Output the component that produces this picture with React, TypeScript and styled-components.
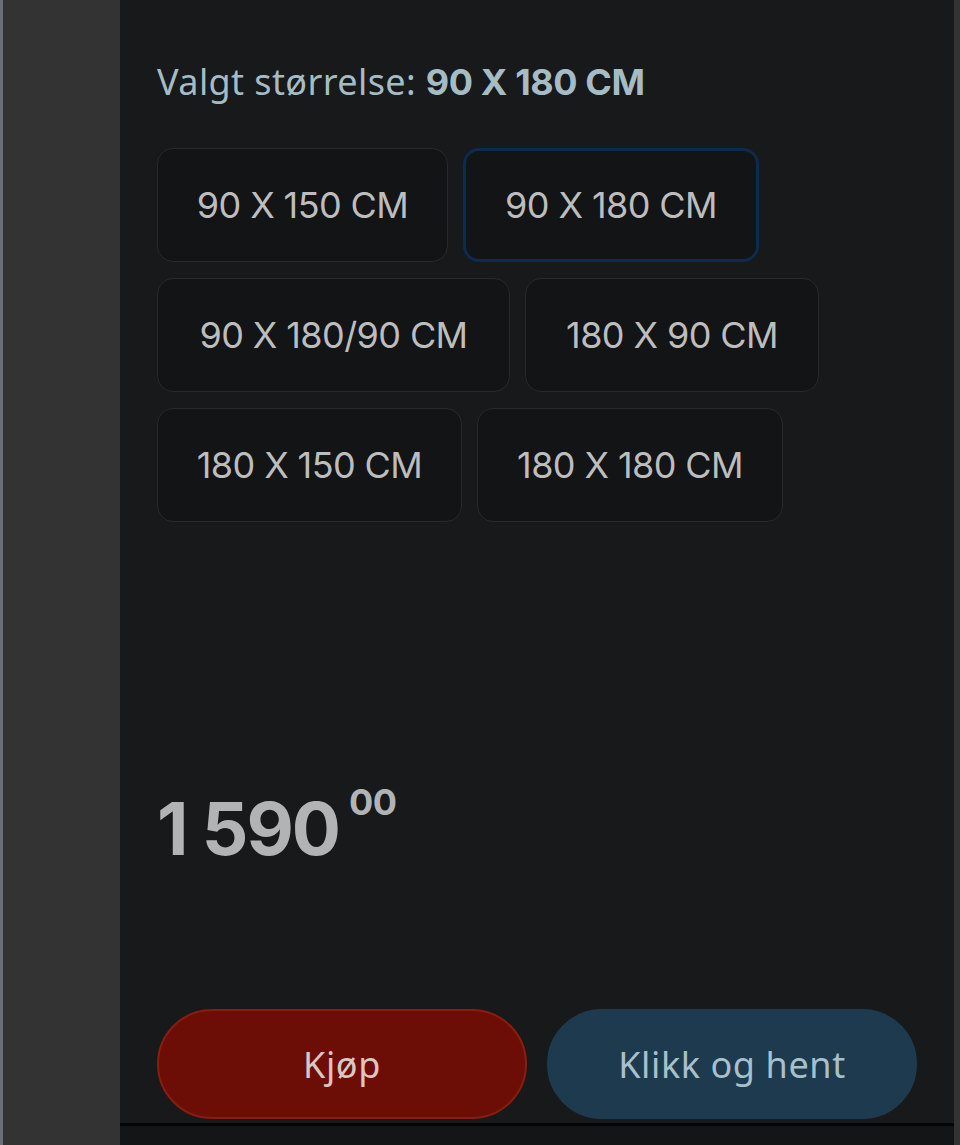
import React from "react";
import styled, { createGlobalStyle } from "styled-components";

const GlobalStyle = createGlobalStyle`
  html, body {
    margin: 0;
    padding: 0;
    background: #333333;
  }
  #root {
    height: 1145px;
  }
`;

const Screen = styled.div`
  height: 1145px;
  display: flex;
  background: #333333;
  border-left: 3px solid #6b6f76;
  box-sizing: border-box;
`;

const SideGap = styled.div`
  width: ${props => props.width}px;
  flex-shrink: 0;
  background: #333333;
`;

const Panel = styled.div`
  flex: 1;
  display: flex;
  flex-direction: column;
  background: #17191b;
`;

const Content = styled.div`
  flex: 1;
  display: flex;
  flex-direction: column;
  padding: 58px 37px 4px 37px;
`;

const Label = styled.div`
  font-family: "Noto Sans", "Open Sans", sans-serif;
  font-size: 36px;
  line-height: 48px;
  color: #a6bcc4;
  letter-spacing: 0.4px;
`;

const Strong = styled.span`
  font-family: Inter, "Noto Sans", sans-serif;
  font-size: 36px;
  font-weight: 700;
  letter-spacing: -0.4px;
`;

const Sizes = styled.div`
  display: flex;
  flex-direction: column;
  gap: 16px;
  margin-top: 42px;
`;

const SizeRow = styled.div`
  display: flex;
  gap: 15px;
`;

const SizeChip = styled.button`
  width: ${props => props.w}px;
  height: 114px;
  box-sizing: border-box;
  background: #131415;
  border: ${props => (props.selected ? "3px solid #0f2a4f" : "1.5px solid #27292c")};
  border-radius: 16px;
  color: #bdbdbd;
  font-family: Inter, "Noto Sans", sans-serif;
  font-size: 36px;
  font-weight: 400;
  letter-spacing: -0.6px;
  display: flex;
  align-items: center;
  justify-content: center;
  padding: 0;
`;

const Price = styled.div`
  margin-top: auto;
  display: flex;
  align-items: flex-start;
  color: #b2b3b5;
  font-family: Inter, "Noto Sans", sans-serif;
  font-weight: 700;
`;

const Whole = styled.span`
  font-size: 73px;
  line-height: 88px;
  letter-spacing: -2px;
`;

const Cents = styled.span`
  font-size: 36px;
  line-height: 40px;
  margin-left: 10px;
  margin-top: -3px;
  letter-spacing: -0.5px;
`;

const Actions = styled.div`
  display: flex;
  gap: 20px;
  margin-top: 136px;
`;

const ActionButton = styled.button`
  flex: 1;
  height: 110px;
  border-radius: 55px;
  border: 2px solid ${props => (props.primary ? "#8a1d10" : "#1f3b51")};
  background: ${props => (props.primary ? "#6d0e06" : "#1e3a4f")};
  color: ${props => (props.primary ? "#dcc6c3" : "#a8c0c9")};
  font-family: "Noto Sans", "Open Sans", sans-serif;
  font-size: 36px;
  letter-spacing: 0.6px;
  display: flex;
  align-items: center;
  justify-content: center;
  padding: 0;
`;

const BottomBar = styled.div`
  height: 19px;
  background: #131517;
  border-top: 3px solid #050505;
`;

const rows = [
  [
    { label: "90 X 150 CM", w: 291 },
    { label: "90 X 180 CM", w: 296, selected: true },
  ],
  [
    { label: "90 X 180/90 CM", w: 353 },
    { label: "180 X 90 CM", w: 294 },
  ],
  [
    { label: "180 X 150 CM", w: 305 },
    { label: "180 X 180 CM", w: 306 },
  ],
];

export default function App() {
  return (
    <>
      <GlobalStyle />
      <Screen>
        <SideGap width={117} />
        <Panel>
          <Content>
            <Label>
              Valgt størrelse: <Strong>90 X 180 CM</Strong>
            </Label>
            <Sizes>
              {rows.map((row, i) => (
                <SizeRow key={i}>
                  {row.map(s => (
                    <SizeChip key={s.label} w={s.w} selected={s.selected}>
                      {s.label}
                    </SizeChip>
                  ))}
                </SizeRow>
              ))}
            </Sizes>
            <Price>
              <Whole>1 590</Whole>
              <Cents>00</Cents>
            </Price>
            <Actions>
              <ActionButton primary>Kjøp</ActionButton>
              <ActionButton>Klikk og hent</ActionButton>
            </Actions>
          </Content>
          <BottomBar />
        </Panel>
        <SideGap width={6} />
      </Screen>
    </>
  );
}
